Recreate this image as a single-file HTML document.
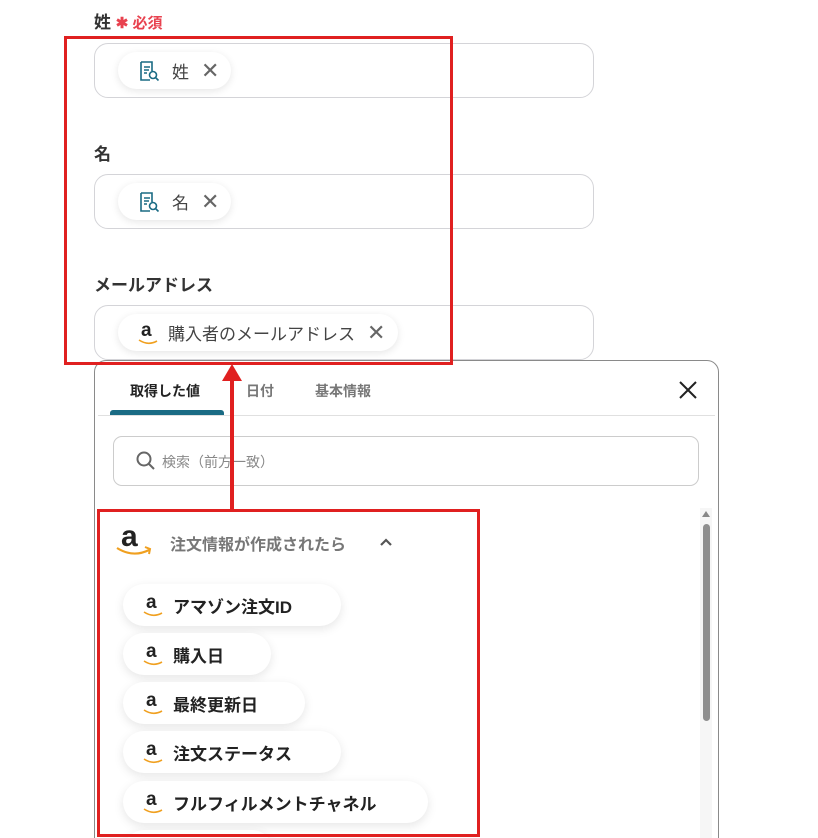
<!DOCTYPE html>
<html style="width:818px;height:838px;overflow:hidden"><head><meta charset="utf-8"><style>
*{box-sizing:border-box;margin:0;padding:0}
body{width:818px;height:838px;background:#fff;position:relative;overflow:hidden;font-family:"Liberation Sans","Noto Sans CJK JP",sans-serif;color:#333}
.abs{position:absolute}
.lbl{position:absolute;left:94px;font-size:17px;font-weight:bold;color:#333}
.inp{position:absolute;left:94px;width:500px;height:55px;border:1px solid #d4d4d8;border-radius:14px;background:#fff}
.chip{position:absolute;left:118px;height:37px;border-radius:19px;background:#fff;box-shadow:0 2px 8px rgba(0,0,0,.10);display:flex;align-items:center;padding-left:20px;font-size:17px;color:#444}
.chip .x{font-size:22px;color:#666;margin-left:12px;font-weight:300}
.red{position:absolute;border:3px solid #e02020}
.pill{position:absolute;left:123px;height:42px;border-radius:21px;background:#fff;box-shadow:0 3px 10px rgba(0,0,0,.10);display:flex;align-items:center;padding-left:20px;font-size:17px;font-weight:bold;color:#222}
.am{position:relative;display:inline-block;width:20px;height:22px;margin-right:10px}
.am b{position:absolute;left:3px;top:-2px;font-size:19px;font-weight:bold;color:#222;font-family:"Liberation Sans",sans-serif}
.am svg{position:absolute;left:0;top:16px}
</style></head><body>
<div class="lbl" style="top:8px">姓 <span style="color:#e8424f;font-size:15px">✱ 必須</span></div>
<div class="inp" style="top:43px"></div>
<div class="chip" style="top:52px;width:113px"><svg width="22" height="22" viewBox="0 0 22 22" fill="none" stroke="#1a6b84" stroke-width="1.6"><path d="M3 2h11v9M3 2v18h9"/><path d="M6 7h6M6 10h5M6 13h3"/><circle cx="15" cy="15" r="3.5"/><path d="M17.5 17.5l3 3"/></svg><span style="margin-left:12px">姓</span><span class="x">✕</span></div>

<div class="lbl" style="top:140px">名</div>
<div class="inp" style="top:174px"></div>
<div class="chip" style="top:183px;width:113px"><svg width="22" height="22" viewBox="0 0 22 22" fill="none" stroke="#1a6b84" stroke-width="1.6"><path d="M3 2h11v9M3 2v18h9"/><path d="M6 7h6M6 10h5M6 13h3"/><circle cx="15" cy="15" r="3.5"/><path d="M17.5 17.5l3 3"/></svg><span style="margin-left:12px">名</span><span class="x">✕</span></div>

<div class="lbl" style="top:271px">メールアドレス</div>
<div class="inp" style="top:305px"></div>
<div class="chip" style="top:314px;width:280px"><span class="am"><b>a</b><svg width="22" height="8" viewBox="0 0 22 8"><path d="M1 2q9 6 18 1" stroke="#f0a020" stroke-width="1.6" fill="none"/></svg></span><span>購入者のメールアドレス</span><span class="x">✕</span></div>

<div class="abs" style="left:94px;top:360px;width:625px;height:500px;border:1px solid #8a8a8a;border-radius:12px;background:#fff"></div>
<div class="abs" style="left:130px;top:381px;font-size:14px;font-weight:bold;color:#222">取得した値</div>
<div class="abs" style="left:246px;top:381px;font-size:14px;font-weight:bold;color:#777">日付</div>
<div class="abs" style="left:315px;top:381px;font-size:14px;font-weight:bold;color:#777">基本情報</div>
<div class="abs" style="left:110px;top:410px;width:114px;height:5px;background:#1a6b84;border-radius:3px 3px 0 0"></div>
<div class="abs" style="left:98px;top:415px;width:617px;height:1px;background:#e0e0e0"></div>
<svg class="abs" style="left:678px;top:380px" width="20" height="20" viewBox="0 0 20 20"><path d="M2 2l16 16M18 2L2 18" stroke="#222" stroke-width="2"/></svg>
<div class="abs" style="left:113px;top:436px;width:586px;height:50px;border:1px solid #ccc;border-radius:9px"></div>
<svg class="abs" style="left:135px;top:450px" width="22" height="22" viewBox="0 0 22 22" fill="none" stroke="#666" stroke-width="2"><circle cx="9" cy="9" r="6.5"/><path d="M14 14l5 5"/></svg>
<div class="abs" style="left:162px;top:452px;font-size:14px;color:#888">検索（前方一致）</div>
<div class="abs" style="left:700px;top:508px;width:12px;height:330px;background:#f6f6f6"></div>
<div class="abs" style="left:702px;top:511px;width:0;height:0;border-left:4px solid transparent;border-right:4px solid transparent;border-bottom:6px solid #888"></div>
<div class="abs" style="left:703px;top:524px;width:7px;height:197px;background:#8f8f8f;border-radius:4px"></div>

<div class="abs" style="left:115px;top:522px;width:40px;height:38px"><b style="position:absolute;left:6px;top:-2px;font-size:30px;font-weight:bold;color:#222">a</b><svg style="position:absolute;left:0;top:22px" width="40" height="14" viewBox="0 0 40 14"><path d="M2 4q16 10 32 2" stroke="#f0a020" stroke-width="2.2" fill="none"/><path d="M30 3l5 2-1 5" stroke="#f0a020" stroke-width="2" fill="none"/></svg></div>
<div class="abs" style="left:170px;top:531px;font-size:16px;font-weight:bold;color:#777">注文情報が作成されたら</div>
<svg class="abs" style="left:378px;top:536px" width="16" height="12" viewBox="0 0 16 12"><path d="M3 9l5-5 5 5" stroke="#555" stroke-width="2.2" fill="none"/></svg>

<div class="pill" style="top:584px;width:218px"><span class="am"><b>a</b><svg width="22" height="8" viewBox="0 0 22 8"><path d="M1 2q9 6 18 1" stroke="#f0a020" stroke-width="1.6" fill="none"/></svg></span>アマゾン注文ID</div>
<div class="pill" style="top:633px;width:148px"><span class="am"><b>a</b><svg width="22" height="8" viewBox="0 0 22 8"><path d="M1 2q9 6 18 1" stroke="#f0a020" stroke-width="1.6" fill="none"/></svg></span>購入日</div>
<div class="pill" style="top:682px;width:182px"><span class="am"><b>a</b><svg width="22" height="8" viewBox="0 0 22 8"><path d="M1 2q9 6 18 1" stroke="#f0a020" stroke-width="1.6" fill="none"/></svg></span>最終更新日</div>
<div class="pill" style="top:731px;width:218px"><span class="am"><b>a</b><svg width="22" height="8" viewBox="0 0 22 8"><path d="M1 2q9 6 18 1" stroke="#f0a020" stroke-width="1.6" fill="none"/></svg></span>注文ステータス</div>
<div class="pill" style="top:781px;width:305px"><span class="am"><b>a</b><svg width="22" height="8" viewBox="0 0 22 8"><path d="M1 2q9 6 18 1" stroke="#f0a020" stroke-width="1.6" fill="none"/></svg></span>フルフィルメントチャネル</div>
<div class="pill" style="top:830px;width:150px"></div>

<div class="red" style="left:64px;top:36px;width:389px;height:329px"></div>
<div class="red" style="left:97px;top:509px;width:383px;height:328px"></div>
<div class="abs" style="left:230px;top:378px;width:4px;height:132px;background:#e02020"></div>
<div class="abs" style="left:222px;top:364px;width:0;height:0;border-left:10px solid transparent;border-right:10px solid transparent;border-bottom:17px solid #e02020"></div>
</body></html>
